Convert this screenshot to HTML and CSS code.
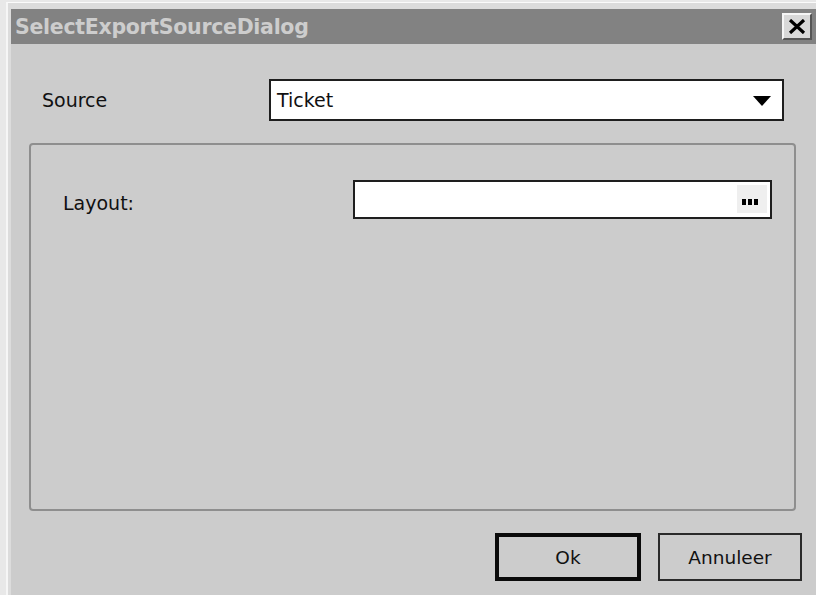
FILE: index.html
```html
<!DOCTYPE html>
<html lang="nl">
<head>
<meta charset="utf-8">
<title>SelectExportSourceDialog</title>
<link rel="stylesheet" href="styles.css">
</head>
<body>
  <div class="window">
    <div class="titlebar">
      <span class="title">SelectExportSourceDialog</span>
      <button class="close" type="button" aria-label="Sluiten">
        <svg width="18" height="15" viewBox="0 0 18 15"><path d="M2 1 L16 14 M16 1 L2 14" stroke="#000" stroke-width="3.2" fill="none"/></svg>
      </button>
    </div>
    <div class="client">
      <div class="source-row">
        <span class="label">Source</span>
        <div class="combo">
          <span class="combo-value">Ticket</span>
          <svg class="combo-arrow" width="18" height="10" viewBox="0 0 18 10"><path d="M0 0 H18 L9 10 Z" fill="#000"/></svg>
        </div>
      </div>
      <div class="group">
        <div class="layout-row">
          <span class="label">Layout:</span>
          <div class="picker">
            <span class="picker-btn"><i></i><i></i><i></i></span>
          </div>
        </div>
      </div>
      <div class="actions">
        <button class="btn btn-default" type="button">Ok</button>
        <button class="btn" type="button">Annuleer</button>
      </div>
    </div>
  </div>
</body>
</html>
```
FILE: styles.css
```css
html, body {
  margin: 0;
  height: 100%;
}

body {
  background: #e8e8e8;
  padding: 2px 0 0 6px;
  box-sizing: border-box;
  overflow: hidden;
  font-family: "DejaVu Sans", "Liberation Sans", sans-serif;
  color: #111;
}

.window {
  height: 100%;
  display: flex;
  flex-direction: column;
  background: #dcdcdc;
  border-top: 1px solid #fbfbfb;
  border-left: 2px solid #f6f6f6;
  padding: 6px 0 0 3px;
  box-sizing: border-box;
}

/* caption bar */
.titlebar {
  height: 35px;
  flex: none;
  background: #828282;
  display: flex;
  align-items: center;
  justify-content: space-between;
  padding: 0 4px 0 4px;
}

.title {
  font-size: 20.5px;
  font-weight: bold;
  color: #cdcdcd;
  letter-spacing: -0.3px;
}

.close {
  width: 30px;
  height: 27px;
  padding: 0;
  margin: 0;
  background: #d8d8d8;
  border: 2px solid;
  border-color: #f6f6f6 #555 #555 #f6f6f6;
  display: flex;
  align-items: center;
  justify-content: center;
  box-sizing: border-box;
}

/* dialog body */
.client {
  flex: 1;
  background: #cccccc;
  padding-top: 35px;
}

.label {
  font-size: 19px;
}

.source-row {
  display: flex;
  align-items: center;
  padding-left: 31px;
}

.source-row .label {
  width: 227px;
}

.combo {
  width: 515px;
  height: 42px;
  box-sizing: border-box;
  background: #fff;
  border: 2px solid #1e1e1e;
  display: flex;
  align-items: center;
  justify-content: space-between;
  padding: 0 11px 0 6px;
}

.combo-value {
  font-size: 19px;
}

.combo-arrow {
  margin-top: 2px;
}

.group {
  margin: 22px 0 0 18px;
  width: 767px;
  height: 368px;
  box-sizing: border-box;
  border: 2px solid #8e8e8e;
  border-radius: 4px;
  padding: 35px 0 0 32px;
}

.layout-row {
  display: flex;
  align-items: center;
}

.layout-row .label {
  width: 290px;
  margin-top: 6px;
}

.picker {
  width: 419px;
  height: 39px;
  box-sizing: border-box;
  background: #fff;
  border: 2px solid #1e1e1e;
  display: flex;
  justify-content: flex-end;
  padding: 3px 3px 4px 0;
}

.picker-btn {
  width: 30px;
  background: #efefef;
  display: flex;
  align-items: center;
  justify-content: center;
  gap: 2px;
  padding: 6px 5px 0 0;
  box-sizing: border-box;
}

.picker-btn i {
  width: 4px;
  height: 6px;
  background: #000;
}

.actions {
  display: flex;
  justify-content: flex-end;
  gap: 17px;
  margin-top: 22px;
  padding-right: 14px;
}

.btn {
  width: 144px;
  height: 48px;
  margin: 0;
  box-sizing: border-box;
  background: #cccccc;
  border: 2px solid #2a2a2a;
  font-family: inherit;
  font-size: 18.5px;
  color: #111;
  padding: 0;
}

.btn-default {
  width: 146px;
  border: 4px solid #0a0a0a;
}
```
